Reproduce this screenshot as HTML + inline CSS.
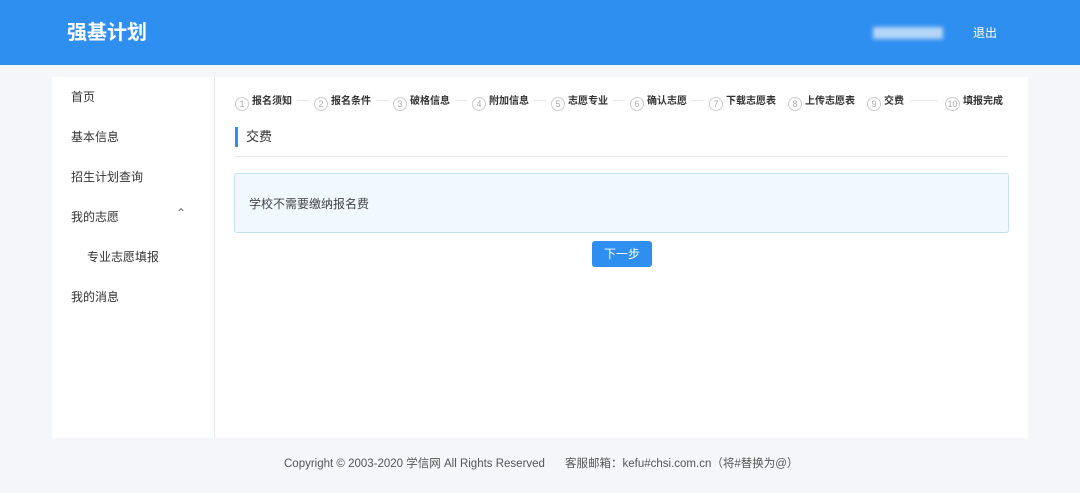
<!DOCTYPE html><html><head><meta charset="utf-8"><style>
body{margin:0;width:1080px;height:493px;background:#f4f6f9;font-family:"Liberation Sans","Noto Sans CJK SC",sans-serif;position:relative;overflow:hidden}
.hd{position:absolute;left:0;top:0;width:1080px;height:65px;background:#2e8ff0}
.logo{position:absolute;left:67px;top:16px;color:#fff;font-size:20px;font-weight:bold}
.blur{position:absolute;left:873px;top:27px;width:70px;height:12px;background:#b7d6f7;filter:blur(2px)}
.out{position:absolute;left:973px;top:24px;color:#fff;font-size:12px}
.side{position:absolute;left:52px;top:77px;width:162px;height:361px;background:#fff;border-right:1px solid #e4e8ee}
.side div{position:absolute;left:19px;font-size:12px;color:#333}
.main{position:absolute;left:215px;top:77px;width:813px;height:361px;background:#fff}
.st{position:absolute;top:92px;font-size:10px;color:#333;white-space:nowrap;font-weight:bold}
.st i{display:inline-block;width:12px;height:12px;border:1px solid #ccc;border-radius:50%;font-style:normal;font-weight:normal;color:#aaa;font-size:9px;text-align:center;line-height:12px;margin-right:3px;vertical-align:-3px}
.ln{position:absolute;top:100px;height:1px;background:#e5e5e5}
.ttl{position:absolute;left:235px;top:127px;height:20px;border-left:3px solid #2e8ff0;padding-left:8px;font-size:13px;color:#333;line-height:20px}
.hr{position:absolute;left:235px;top:156px;width:773px;height:1px;background:#e5e5e5}
.box{position:absolute;left:234px;top:173px;width:773px;height:58px;background:#f0f9ff;border:1px solid #bfe3f2;border-radius:3px}
.box span{position:absolute;left:14px;top:21px;font-size:12px;color:#444}
.btn{position:absolute;left:592px;top:241px;width:60px;height:26px;background:#2e8ff0;border-radius:3px;color:#fff;font-size:12px;text-align:center;line-height:26px}
.ft{position:absolute;top:455px;font-size:11.5px;color:#555;white-space:nowrap}
</style></head><body>
<div class="hd"><div class="logo">强基计划</div><div class="blur"></div><div class="out">退出</div></div>
<div class="side">
<div style="top:11px">首页</div><div style="top:51px">基本信息</div><div style="top:91px">招生计划查询</div>
<div style="top:131px">我的志愿</div><div style="top:129px;left:124px;color:#666">⌃</div>
<div style="top:171px;left:35px">专业志愿填报</div><div style="top:211px">我的消息</div></div>
<div class="main"></div>
<div class="st" style="left:235px"><i>1</i>报名须知</div>
<div class="st" style="left:314px"><i>2</i>报名条件</div>
<div class="st" style="left:393px"><i>3</i>破格信息</div>
<div class="st" style="left:472px"><i>4</i>附加信息</div>
<div class="st" style="left:551px"><i>5</i>志愿专业</div>
<div class="st" style="left:630px"><i>6</i>确认志愿</div>
<div class="st" style="left:709px"><i>7</i>下载志愿表</div>
<div class="st" style="left:788px"><i>8</i>上传志愿表</div>
<div class="st" style="left:867px"><i>9</i>交费</div>
<div class="st" style="left:945px"><i style="width:13px">10</i>填报完成</div>
<div class="ln" style="left:297px;width:12px"></div><div class="ln" style="left:376px;width:12px"></div><div class="ln" style="left:455px;width:12px"></div><div class="ln" style="left:534px;width:12px"></div><div class="ln" style="left:613px;width:12px"></div><div class="ln" style="left:692px;width:12px"></div><div class="ln" style="left:910px;width:28px"></div>
<div class="ttl">交费</div><div class="hr"></div>
<div class="box"><span>学校不需要缴纳报名费</span></div>
<div class="btn">下一步</div>
<div class="ft" style="left:284px">Copyright © 2003-2020 学信网 All Rights Reserved</div>
<div class="ft" style="left:565px">客服邮箱：kefu#chsi.com.cn（将#替换为@）</div>
</body></html>
